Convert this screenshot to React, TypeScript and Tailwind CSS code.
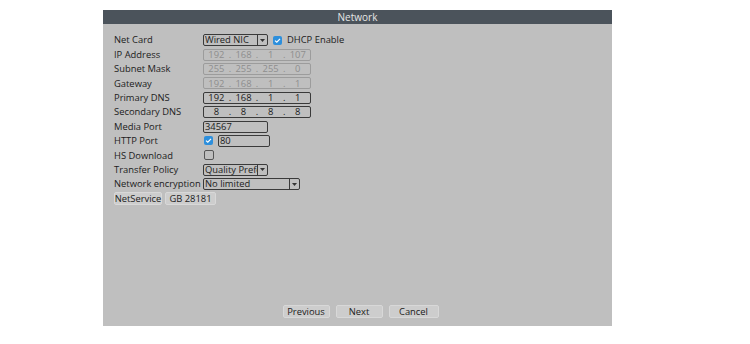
import React from "react";

const font = { fontFamily: '"Open Sans", "Noto Sans", sans-serif' };

function Check({ on }: { on: boolean }) {
  if (on)
    return (
      <span className="block shrink-0 w-[9px] h-[9px] rounded-[2px] bg-[#2d8fdc] flex items-center justify-center">
        <svg width="7" height="7" viewBox="0 0 7 7">
          <path d="M1 3.6 L2.8 5.2 L6 1.8" stroke="white" strokeWidth="1.2" fill="none" />
        </svg>
      </span>
    );
  return <span className="block shrink-0 w-[10px] h-[10px] rounded-[2px] border border-[#555] bg-transparent" />;
}

function IP({ parts, disabled }: { parts: string[]; disabled?: boolean }) {
  return (
    <div
      className={`w-[108px] h-[12px] rounded-[2px] border flex items-center ${
        disabled ? "border-[#9c9c9c] text-[#8e8e8e]" : "border-[#3a3a3a] text-[#1c1c1c]"
      }`}
    >
      {parts.map((p, i) => (
        <React.Fragment key={i}>
          <span className="flex-1 text-center leading-none">{p}</span>
          {i < 3 && <span className="leading-none">.</span>}
        </React.Fragment>
      ))}
    </div>
  );
}

function Select({ text, w, clip }: { text: string; w: string; clip?: boolean }) {
  return (
    <div className={`${w} h-[12px] rounded-[2px] border border-[#3a3a3a] flex items-center`}>
      <span
        className={`flex-1 min-w-0 pl-[1px] leading-none whitespace-nowrap ${clip ? "overflow-x-clip" : ""}`}
      >
        {text}
      </span>
      <span className="w-[10px] shrink-0 h-full border-l border-[#3a3a3a] flex items-center justify-center">
        <svg width="5" height="3" viewBox="0 0 5 3">
          <path d="M0 0 L5 0 L2.5 3 Z" fill="#333" />
        </svg>
      </span>
    </div>
  );
}

function Input({ text, w }: { text: string; w: string }) {
  return (
    <div className={`${w} h-[12px] rounded-[2px] border border-[#3a3a3a] flex items-center pl-[1px] leading-none`}>
      {text}
    </div>
  );
}

function Row({ label, children }: { label: string; children?: React.ReactNode }) {
  return (
    <div className="h-[14.4px] flex items-center">
      <span className="w-[89px] shrink-0 whitespace-nowrap leading-none">{label}</span>
      <div className="flex items-center gap-[5px]">{children}</div>
    </div>
  );
}

function Btn({ text, w }: { text: string; w: string }) {
  return (
    <div className={`${w} h-[13px] rounded-[2px] bg-[#cdcdcd] border border-[#d8d8d8] flex items-center justify-center leading-none`}>
      {text}
    </div>
  );
}

export default function App() {
  return (
    <div className="w-[750px] h-[344px] bg-white pt-[10px] pl-[103px]" style={font}>
      <div className="w-[509px] h-[316px] bg-[#bfbfbf] flex flex-col text-[9.4px] text-[#1c1c1c]">
        <div className="h-[14px] bg-[#4b535b] text-[#e6e6e6] text-[10px] flex items-center justify-center leading-none">
          Network
        </div>
        <div className="flex-1 flex flex-col pl-[11px] pt-[9px]">
          <Row label="Net Card">
            <Select text="Wired NIC" w="w-[65px]" />
            <Check on />
            <span className="leading-none">DHCP Enable</span>
          </Row>
          <Row label="IP Address">
            <IP parts={["192", "168", "1", "107"]} disabled />
          </Row>
          <Row label="Subnet Mask">
            <IP parts={["255", "255", "255", "0"]} disabled />
          </Row>
          <Row label="Gateway">
            <IP parts={["192", "168", "1", "1"]} disabled />
          </Row>
          <Row label="Primary DNS">
            <IP parts={["192", "168", "1", "1"]} />
          </Row>
          <Row label="Secondary DNS">
            <IP parts={["8", "8", "8", "8"]} />
          </Row>
          <Row label="Media Port">
            <Input text="34567" w="w-[65px]" />
          </Row>
          <Row label="HTTP Port">
            <div className="pl-[1px]"><Check on /></div>
            <Input text="80" w="w-[52px]" />
          </Row>
          <Row label="HS Download">
            <div className="pl-[1px]"><Check on={false} /></div>
          </Row>
          <Row label="Transfer Policy">
            <Select text="Quality Preference" w="w-[65px]" clip />
          </Row>
          <Row label="Network encryption">
            <Select text="No limited" w="w-[97px]" />
          </Row>
          <div className="h-[14.4px] flex items-center gap-[3px]">
            <Btn text="NetService" w="w-[48px]" />
            <Btn text="GB 28181" w="w-[51px]" />
          </div>
          <div className="flex-1" />
          <div className="flex justify-center gap-[6px] pb-[8px] pr-[5px]">
            <Btn text="Previous" w="w-[47px]" />
            <Btn text="Next" w="w-[47px]" />
            <Btn text="Cancel" w="w-[50px]" />
          </div>
        </div>
      </div>
    </div>
  );
}
